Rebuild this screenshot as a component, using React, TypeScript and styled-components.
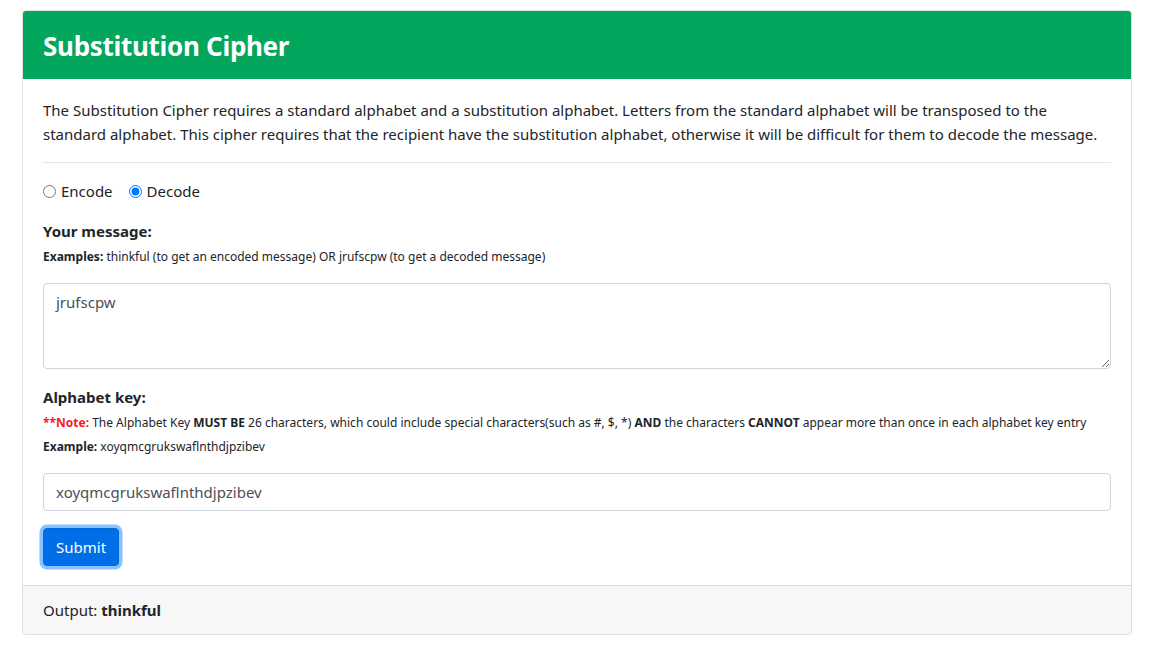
import React from "react";
import styled, { createGlobalStyle } from "styled-components";

const Global = createGlobalStyle`
  * { box-sizing: border-box; }
  body {
    margin: 0;
    font-family: "Noto Sans", "Open Sans", sans-serif;
    color: #212529;
    background: #fff;
    font-size: 15px;
    line-height: 1.5;
  }
`;

const Card = styled.div`
  margin: 10px 26px 24px 22px;
  border: 1px solid rgba(0, 0, 0, 0.125);
  border-radius: 4px;
  overflow: hidden;
`;

const Header = styled.div`
  background: #02a65d;
  color: #fff;
  padding: 2px 20px 0;
  height: 68px;
  display: flex;
  align-items: center;
`;

const Title = styled.h2`
  margin: 0;
  font-size: 26px;
  font-weight: 700;
  letter-spacing: -0.3px;
`;

const Body = styled.div`
  padding: 19px 20px 19px 20px;
`;

const Intro = styled.p`
  margin: 0 0 16px;
  font-size: 15px;
  line-height: 24px;
`;

const Rule = styled.hr`
  border: 0;
  border-top: 1px solid rgba(0, 0, 0, 0.1);
  margin: 0 0 17px;
`;

const RadioRow = styled.div`
  display: flex;
  gap: 16px;
  margin-bottom: 16px;
`;

const RadioLabel = styled.label`
  display: flex;
  align-items: center;
  gap: 5px;
  font-size: 15px;
`;

const Radio = styled.input`
  margin: 0;
  width: 13px;
  height: 13px;
`;

const Label = styled.div`
  font-weight: 700;
  font-size: 15px;
  line-height: 24px;
`;

const Hint = styled.div`
  font-size: 12px;
  line-height: 18px;
  margin-top: 5px;
  margin-bottom: 6px;
`;

const SubHint = styled(Hint)`
  margin-top: 6px;
`;

const Note = styled.span`
  color: #f01d1d;
  font-weight: 700;
`;

const TextArea = styled.textarea`
  display: block;
  width: 100%;
  height: 86px;
  margin-top: 17px;
  margin-bottom: 16px;
  padding: 8px 12px 6px;
  font-family: inherit;
  font-size: 15px;
  color: #495057;
  border: 1px solid #ced4da;
  border-radius: 4px;
  resize: vertical;
`;

const TextInput = styled.input`
  display: block;
  width: 100%;
  height: 38px;
  margin-top: 17px;
  padding: 6px 12px;
  font-family: inherit;
  font-size: 15px;
  color: #495057;
  border: 1px solid #ced4da;
  border-radius: 4px;
`;

const Button = styled.button`
  margin-top: 17px;
  background: #006ee6;
  color: #fff;
  border: 1px solid #0069d9;
  border-radius: 4px;
  padding: 6px 12px;
  font-family: inherit;
  font-size: 15px;
  line-height: 24px;
  box-shadow: 0 0 0 3.5px rgba(38, 143, 255, 0.55);
`;

const Footer = styled.div`
  background: #f7f7f7;
  border-top: 1px solid rgba(0, 0, 0, 0.125);
  padding: 12px 20px;
  font-size: 15px;
  line-height: 24px;
`;

export default function App() {
  return (
    <>
      <Global />
      <Card>
        <Header>
          <Title>Substitution Cipher</Title>
        </Header>
        <Body>
          <Intro>
            The Substitution Cipher requires a standard alphabet and a substitution alphabet. Letters from the standard
            alphabet will be transposed to the standard alphabet. This cipher requires that the recipient have the
            substitution alphabet, otherwise it will be difficult for them to decode the message.
          </Intro>
          <Rule />
          <RadioRow>
            <RadioLabel>
              <Radio type="radio" name="mode" /> Encode
            </RadioLabel>
            <RadioLabel>
              <Radio type="radio" name="mode" defaultChecked /> Decode
            </RadioLabel>
          </RadioRow>
          <Label>Your message:</Label>
          <Hint>
            <b>Examples:</b> thinkful (to get an encoded message) OR jrufscpw (to get a decoded message)
          </Hint>
          <TextArea defaultValue="jrufscpw" />
          <Label>Alphabet key:</Label>
          <Hint>
            <Note>**Note:</Note> The Alphabet Key <b>MUST BE</b> 26 characters, which could include special
            characters(such as #, $, *) <b>AND</b> the characters <b>CANNOT</b> appear more than once in each alphabet
            key entry
          </Hint>
          <SubHint>
            <b>Example:</b> xoyqmcgrukswaflnthdjpzibev
          </SubHint>
          <TextInput defaultValue="xoyqmcgrukswaflnthdjpzibev" />
          <Button>Submit</Button>
        </Body>
        <Footer>
          Output: <b>thinkful</b>
        </Footer>
      </Card>
    </>
  );
}
